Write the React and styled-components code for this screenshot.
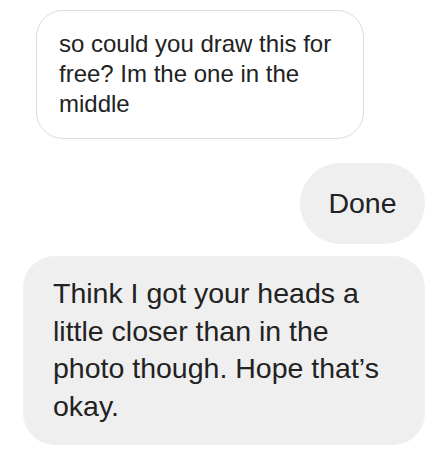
import React from "react"
import styled, { createGlobalStyle } from "styled-components"

const GlobalStyle = createGlobalStyle`
  body {
    margin: 0;
    background: #ffffff;
    font-family: "Liberation Sans", Arial, sans-serif;
    color: #222222;
  }
`

const Thread = styled.div`
  display: flex;
  flex-direction: column;
  align-items: flex-start;
  padding-top: 10px;
`

const Bubble = styled.div`
  box-sizing: border-box;
  align-self: ${(p) => (p.mine ? "flex-end" : "flex-start")};
  background: ${(p) => (p.outlined ? "#ffffff" : "#efefef")};
  border: ${(p) => (p.outlined ? "1px solid #dcdcdc" : "none")};
  white-space: nowrap;
`

const TheirSmall = styled(Bubble)`
  margin-left: 36px;
  width: 328px;
  padding: 18px 22px 19px;
  border-radius: 27px;
  font-size: 24px;
  line-height: 30px;
`

const Mine = styled(Bubble)`
  margin-top: 24px;
  margin-right: 21px;
  width: 125px;
  height: 81px;
  display: flex;
  align-items: center;
  justify-content: center;
  border-radius: 41px;
  font-size: 28.5px;
`

const TheirLarge = styled(Bubble)`
  margin-top: 12px;
  margin-left: 23px;
  width: 402px;
  padding: 19px 30px 20px;
  border-radius: 32px;
  font-size: 28.5px;
  line-height: 37.5px;
`

const Line = styled.div``

const App = () => {
  return (
    <>
      <GlobalStyle />
      <Thread>
        <TheirSmall outlined>
          <Line>so could you draw this for</Line>
          <Line>free? Im the one in the</Line>
          <Line>middle</Line>
        </TheirSmall>
        <Mine mine>Done</Mine>
        <TheirLarge>
          <Line>Think I got your heads a</Line>
          <Line>little closer than in the</Line>
          <Line>photo though. Hope that’s</Line>
          <Line>okay.</Line>
        </TheirLarge>
      </Thread>
    </>
  )
}

export default App
